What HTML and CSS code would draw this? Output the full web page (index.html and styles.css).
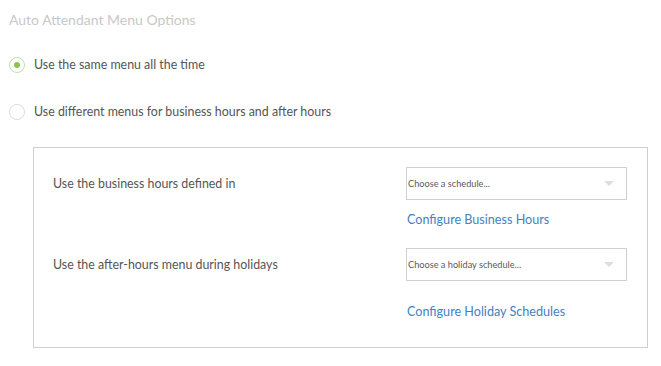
FILE: index.html
```html
<!DOCTYPE html>
<html lang="en">
<head>
    <meta charset="UTF-8">
    <meta name="viewport" content="width=device-width, initial-scale=1.0">
    <title>Auto Attendant Menu Options</title>
    <link rel="stylesheet" href="styles.css">
</head>
<body>
    <!-- Menu options -->
    <div class="page">
        <h2 class="title">Auto Attendant Menu Options</h2>

        <label class="option">
            <span class="radio checked"><span class="dot"></span></span>
            <span>Use the same menu all the time</span>
        </label>

        <label class="option">
            <span class="radio"></span>
            <span>Use different menus for business hours and after hours</span>
        </label>

        <!-- Schedule panel -->
        <div class="panel">
            <div class="row">
                <div class="row-label">Use the business hours defined in</div>
                <div class="row-control">
                    <div class="select">
                        <span>Choose a schedule...</span>
                        <span class="arrow"></span>
                    </div>
                    <a class="link first" href="#">Configure Business Hours</a>
                </div>
            </div>
            <div class="row second">
                <div class="row-label">Use the after-hours menu during holidays</div>
                <div class="row-control">
                    <div class="select">
                        <span>Choose a holiday schedule...</span>
                        <span class="arrow"></span>
                    </div>
                    <a class="link last" href="#">Configure Holiday Schedules</a>
                </div>
            </div>
        </div>
    </div>
</body>
</html>
```

FILE: styles.css
```css
body {
    margin: 0;
    padding: 0;
    background: #fff;
    font-family: 'Lato', 'Liberation Sans', sans-serif;
    color: #555;
}

.page {
    padding: 12px 0 0 9px;
}

.title {
    margin: 0;
    font-size: 14px;
    font-weight: normal;
    line-height: 16px;
    color: #c8c8c8;
}

/* Radio options */
.option {
    display: flex;
    align-items: center;
    gap: 9px;
    font-size: 12.4px;
    line-height: 16px;
    margin-top: 29px;
}

.option + .option {
    margin-top: 31px;
}

.radio {
    width: 14px;
    height: 14px;
    border: 1px solid #dcdcdc;
    border-radius: 50%;
    display: flex;
    justify-content: center;
    align-items: center;
    background: #fff;
}

.radio.checked {
    border-color: #c4dfa8;
}

.radio .dot {
    width: 6px;
    height: 6px;
    border-radius: 50%;
    background: #8cc24f;
}

/* Panel */
.panel {
    margin: 27px 0 0 24px;
    width: 594px;
    border: 1px solid #cfcfcf;
    padding: 19px 0 27px 19px;
}

.row {
    display: flex;
    align-items: flex-start;
}

.row.second {
    margin-top: 20px;
}

.row-label {
    width: 353px;
    font-size: 12.4px;
    line-height: 33px;
}

.row-control {
    width: 221px;
    display: flex;
    flex-direction: column;
}

.select {
    height: 31px;
    border: 1px solid #d0d0d0;
    display: flex;
    align-items: center;
    justify-content: space-between;
    padding: 0 12px 0 1px;
    font-size: 9.2px;
    color: #5a5a5a;
}

.arrow {
    width: 0;
    height: 0;
    border-left: 5px solid transparent;
    border-right: 5px solid transparent;
    border-top: 5px solid #dedede;
}

.link {
    font-size: 12.6px;
    line-height: 16px;
    color: #4282c2;
    text-decoration: none;
    padding-left: 1px;
}

.link.first {
    margin-top: 12px;
}

.link.last {
    margin-top: 23px;
}
```
